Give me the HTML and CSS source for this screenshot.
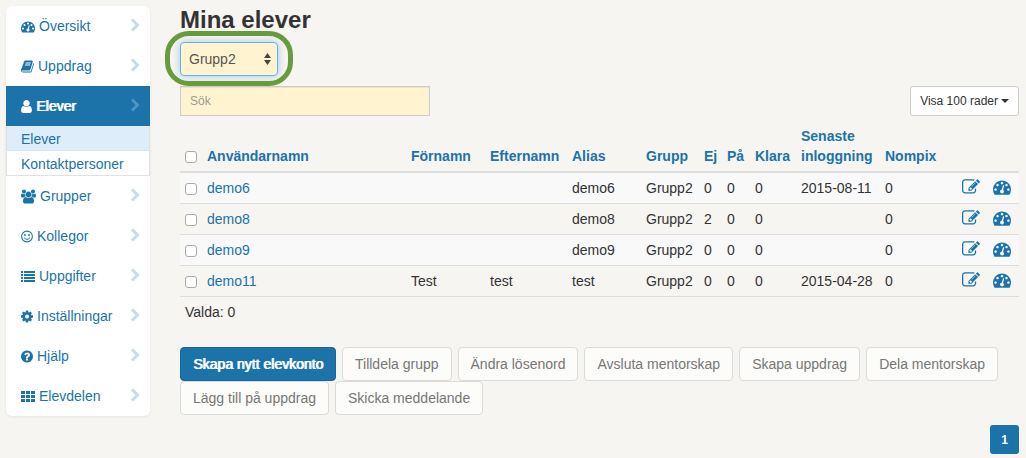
FILE: index.html
```html
<!DOCTYPE html>
<html lang="sv">
<head>
<meta charset="utf-8">
<meta name="viewport" content="width=device-width, initial-scale=1">
<title>Mina elever</title>
<link rel="stylesheet" href="styles.css">
</head>
<body>
<svg class="sprite" aria-hidden="true">
  <symbol id="i-dash" viewBox="0 0 1792 1792"><path d="M384 1152q0-53-37.5-90.5t-90.5-37.5-90.5 37.5-37.5 90.5 37.5 90.5 90.5 37.5 90.5-37.5 37.5-90.5zm192-448q0-53-37.5-90.5t-90.5-37.5-90.5 37.5-37.5 90.5 37.5 90.5 90.5 37.5 90.5-37.5 37.5-90.5zm428 481l101-382q6-26-7.5-48.5t-38.5-29.5-48 6.5-30 39.5l-101 382q-60 5-107 43.5t-63 98.5q-20 77 20 146t117 89 146-20 89-117q16-60-6-117t-72-91zm660-33q0-53-37.5-90.5t-90.5-37.5-90.5 37.5-37.5 90.5 37.5 90.5 90.5 37.5 90.5-37.5 37.5-90.5zm-640-640q0-53-37.5-90.5t-90.5-37.5-90.5 37.5-37.5 90.5 37.5 90.5 90.5 37.5 90.5-37.5 37.5-90.5zm448 192q0-53-37.5-90.5t-90.5-37.5-90.5 37.5-37.5 90.5 37.5 90.5 90.5 37.5 90.5-37.5 37.5-90.5zm320 448q0 261-141 483-19 29-54 29h-1402q-35 0-54-29-141-221-141-483 0-182 71-348t191-286 286-191 348-71 348 71 286 191 191 286 71 348z"/></symbol>
  <symbol id="i-book" viewBox="0 0 1664 1792"><path d="M1639 478q40 57 18 129l-275 906q-19 64-76.5 107.5t-122.5 43.5h-923q-77 0-148.5-53.5t-99.5-131.5q-24-67-2-127 0-4 3-27t4-37q1-8-3-21.5t-3-19.5q2-11 8-21t16.5-23.5 16.5-23.5q23-38 45-91.5t30-91.5q3-10 .5-30t-.5-28q3-11 17-28t17-23q21-36 42-92t25-90q1-9-2.5-32t.5-28q4-13 22-30.5t22-22.5q19-26 42.5-84.5t27.5-96.5q1-8-3-25.5t-2-26.5q2-8 9-18t18-23 17-21q8-12 16.5-30.5t15-35 16-36 19.5-32 26.5-23.5 36-11.5 47.5 5.5l-1 3q38-9 51-9h761q74 0 114 56t18 130l-274 906q-36 119-71.5 153.5t-128.5 34.5h-869q-27 0-38 15-11 16-1 43 24 70 144 70h923q29 0 56-15.5t35-41.5l300-987q7-22 5-57 38 15 59 43zm-1064 2q-4 13 2 22.5t20 9.5h608q13 0 25.5-9.5t16.5-22.5l21-64q4-13-2-22.5t-20-9.5h-608q-13 0-25.5 9.5t-16.5 22.5zm-83 256q-4 13 2 22.5t20 9.5h608q13 0 25.5-9.5t16.5-22.5l21-64q4-13-2-22.5t-20-9.5h-608q-13 0-25.5 9.5t-16.5 22.5z"/></symbol>
  <symbol id="i-user" viewBox="256 0 1280 1792"><path d="M1536 1399q0 109-62.5 187t-150.5 78h-854q-88 0-150.5-78t-62.5-187q0-85 8.5-160.5t31.5-152 58.5-131 94-89 134.5-34.5q131 128 313 128t313-128q76 0 134.5 34.5t94 89 58.5 131 31.5 152 8.5 160.5zm-256-887q0 159-112.5 271.5t-271.5 112.5-271.5-112.5-112.5-271.5 112.5-271.5 271.5-112.5 271.5 112.5 112.5 271.5z"/></symbol>
  <symbol id="i-users" viewBox="0 0 1920 1792"><path d="M593 896q-162 5-265 128h-134q-82 0-138-40.5t-56-118.5q0-353 124-353 6 0 43.5 21t97.5 42.5 119 21.5q67 0 133-23-5 37-5 66 0 139 81 256zm1071 637q0 120-73 189.5t-194 69.5h-874q-121 0-194-69.5t-73-189.5q0-53 3.5-103.5t14-109 26.5-108.5 43-97.5 62-81 85.5-53.5 111.5-20q10 0 43 21.5t73 48 107 48 135 21.5 135-21.5 107-48 73-48 43-21.5q61 0 111.5 20t85.5 53.5 62 81 43 97.5 26.5 108.5 14 109 3.5 103.5zm-1024-1277q0 106-75 181t-181 75-181-75-75-181 75-181 181-75 181 75 75 181zm704 384q0 159-112.5 271.5t-271.5 112.5-271.5-112.5-112.5-271.5 112.5-271.5 271.5-112.5 271.5 112.5 112.5 271.5zm576 225q0 78-56 118.5t-138 40.5h-134q-103-123-265-128 81-117 81-256 0-29-5-66 66 23 133 23 59 0 119-21.5t97.5-42.5 43.5-21q124 0 124 353zm-128-609q0 106-75 181t-181 75-181-75-75-181 75-181 181-75 181 75 75 181z"/></symbol>
  <symbol id="i-smile" viewBox="128 0 1536 1792"><circle cx="896" cy="896" r="690" fill="none" stroke="currentColor" stroke-width="135"/><circle cx="640" cy="704" r="120"/><circle cx="1152" cy="704" r="120"/><path d="M560 1060q90 215 336 215t336-215" fill="none" stroke="currentColor" stroke-width="128" stroke-linecap="round"/></symbol>
  <symbol id="i-list" viewBox="0 0 14 15"><path d="M0 2h2v2H0zM0 5h2v2H0zM0 8h2v2H0zM0 11h2v2H0zM3 2h11v2H3zM3 5h11v2H3zM3 8h11v2H3zM3 11h11v2H3z"/></symbol>
  <symbol id="i-cog" viewBox="128 0 1536 1792"><path d="M1152 896q0-106-75-181t-181-75-181 75-75 181 75 181 181 75 181-75 75-181zm512-109v222q0 12-8 23t-20 13l-185 28q-19 54-39 91 35 50 107 138 10 12 10 25t-9 23q-27 37-99 108t-94 71q-12 0-26-9l-138-108q-44 23-91 38-16 136-29 186-7 28-36 28h-222q-14 0-24.5-8.5t-11.5-21.5l-28-184q-49-16-90-37l-141 107q-10 9-25 9-14 0-25-11-126-114-165-168-7-10-7-23 0-12 8-23 15-21 51-66.5t54-70.5q-27-50-41-99l-183-27q-13-2-21-12.5t-8-23.5v-222q0-12 8-23t19-13l186-28q14-46 39-92-40-57-107-138-10-12-10-24 0-10 9-23 26-36 98.5-107.5t94.500-71.500q13 0 26 10l138 107q44-23 91-38 16-136 29-186 7-28 36-28h222q14 0 24.500 8.500t11.500 21.500l28 184q49 16 90 37l142-107q9-9 24-9 13 0 25 10 129 119 165 170 7 8 7 22 0 12-8 23-15 21-51 66.500t-54 70.500q26 50 41 98l183 28q13 2 21 12.500t8 23.500z"/></symbol>
  <symbol id="i-help" viewBox="128 0 1536 1792"><path d="M1024 1376v-192q0-14-9-23t-23-9h-192q-14 0-23 9t-9 23v192q0 14 9 23t23 9h192q14 0 23-9t9-23zm256-672q0-88-55.5-163t-138.5-116-170-41q-243 0-371 213-15 24 8 42l132 100q7 6 19 6 16 0 25-12 53-68 86-92 34-24 86-24 48 0 85.5 26t37.5 59q0 38-20 61t-68 45q-63 28-115.5 86.5t-52.5 125.5v36q0 14 9 23t23 9h192q14 0 23-9t9-23q0-19 21.5-49.5t54.5-49.5q32-18 49-28.5t46-35 44.5-48 28-60.5 12.5-81zm384 192q0 209-103 385.5t-279.5 279.5-385.5 103-385.5-103-279.5-279.5-103-385.5 103-385.5 279.5-279.5 385.5-103 385.5 103 279.5 279.5 103 385.5z"/></symbol>
  <symbol id="i-grid" viewBox="0 0 14 15"><path d="M0 2h4v3H0zM5 2h4v3H5zM10 2h4v3h-4zM0 6h4v3H0zM5 6h4v3H5zM10 6h4v3h-4zM0 10h4v3H0zM5 10h4v3H5zM10 10h4v3h-4z"/></symbol>
  <symbol id="i-chev" viewBox="0 0 10 14"><path d="M2 1.500L7.500 7L2 12.500" fill="none" stroke="currentColor" stroke-width="3"/></symbol>
  <symbol id="i-edit" viewBox="0 0 1792 1792"><path d="M888 1184l116-116-152-152-116 116v56h96v96h56zm440-720q-16-16-33 1l-350 350q-17 17-1 33t33-1l350-350q17-17 1-33zm80 594v190q0 119-84.500 203.500t-203.500 84.500h-832q-119 0-203.500-84.500t-84.500-203.500v-832q0-119 84.500-203.500t203.500-84.500h832q63 0 117 25 15 7 18 23 3 17-9 29l-49 49q-14 14-32 8-23-6-45-6h-832q-66 0-113 47t-47 113v832q0 66 47 113t113 47h832q66 0 113-47t47-113v-126q0-13 9-22l64-64q15-15 35-7t20 29zm-96-738l288 288-672 672h-288v-288zm444 132l-92 92-288-288 92-92q28-28 68-28t68 28l152 152q28 28 28 68t-28 68z"/></symbol>
</svg>
<div class="page">
  <nav class="sidebar" aria-label="Huvudmeny">
    <a class="nav-item" href="#"><svg class="icon w14"><use href="#i-dash"/></svg><span>Översikt</span><svg class="chevron"><use href="#i-chev"/></svg></a>
    <a class="nav-item" href="#"><svg class="icon w13"><use href="#i-book"/></svg><span>Uppdrag</span><svg class="chevron"><use href="#i-chev"/></svg></a>
    <a class="nav-item active" href="#"><svg class="icon w11"><use href="#i-user"/></svg><span>Elever</span><svg class="chevron"><use href="#i-chev"/></svg></a>
    <div class="submenu">
      <a class="sub-item current" href="#">Elever</a>
      <a class="sub-item" href="#">Kontaktpersoner</a>
    </div>
    <a class="nav-item" href="#"><svg class="icon w15"><use href="#i-users"/></svg><span>Grupper</span><svg class="chevron"><use href="#i-chev"/></svg></a>
    <a class="nav-item" href="#"><svg class="icon w12"><use href="#i-smile"/></svg><span>Kollegor</span><svg class="chevron"><use href="#i-chev"/></svg></a>
    <a class="nav-item" href="#"><svg class="icon w14"><use href="#i-list"/></svg><span>Uppgifter</span><svg class="chevron"><use href="#i-chev"/></svg></a>
    <a class="nav-item" href="#"><svg class="icon w12"><use href="#i-cog"/></svg><span>Inställningar</span><svg class="chevron"><use href="#i-chev"/></svg></a>
    <a class="nav-item" href="#"><svg class="icon w12"><use href="#i-help"/></svg><span>Hjälp</span><svg class="chevron"><use href="#i-chev"/></svg></a>
    <a class="nav-item" href="#"><svg class="icon w14"><use href="#i-grid"/></svg><span>Elevdelen</span><svg class="chevron"><use href="#i-chev"/></svg></a>
  </nav>
  <main class="main">
    <h1 class="title">Mina elever</h1>
    <div class="group-picker">
      <select class="group-select" aria-label="Grupp"><option>Grupp2</option></select>
      <svg class="select-arrows" viewBox="0 0 7 12" aria-hidden="true"><path d="M0 5l3.500-5L7 5zM0 7h7l-3.500 5z"/></svg>
    </div>
    <div class="toolbar">
      <input class="search" type="text" placeholder="Sök" aria-label="Sök">
      <button class="rows-button" type="button">Visa 100 rader<span class="caret"></span></button>
    </div>
    <table class="students">
      <colgroup><col class="c-check"><col><col class="c-first"><col class="c-last"><col class="c-alias"><col class="c-group"><col class="c-ej"><col class="c-pa"><col class="c-klara"><col class="c-login"><col class="c-nompix"><col class="c-icon"><col class="c-icon"></colgroup>
      <thead>
        <tr><th><input class="check" type="checkbox" aria-label="Välj alla"></th><th>Användarnamn</th><th>Förnamn</th><th>Efternamn</th><th>Alias</th><th>Grupp</th><th>Ej</th><th>På</th><th>Klara</th><th>Senaste inloggning</th><th>Nompix</th><th></th><th></th></tr>
      </thead>
      <tbody>
        <tr><td><input class="check" type="checkbox" aria-label="demo6"></td><td><a href="#">demo6</a></td><td></td><td></td><td>demo6</td><td>Grupp2</td><td>0</td><td>0</td><td>0</td><td>2015-08-11</td><td>0</td><td><a class="act edit" href="#" aria-label="Redigera"><svg><use href="#i-edit"/></svg></a></td><td><a class="act" href="#" aria-label="Översikt"><svg><use href="#i-dash"/></svg></a></td></tr>
        <tr><td><input class="check" type="checkbox" aria-label="demo8"></td><td><a href="#">demo8</a></td><td></td><td></td><td>demo8</td><td>Grupp2</td><td>2</td><td>0</td><td>0</td><td></td><td>0</td><td><a class="act edit" href="#" aria-label="Redigera"><svg><use href="#i-edit"/></svg></a></td><td><a class="act" href="#" aria-label="Översikt"><svg><use href="#i-dash"/></svg></a></td></tr>
        <tr><td><input class="check" type="checkbox" aria-label="demo9"></td><td><a href="#">demo9</a></td><td></td><td></td><td>demo9</td><td>Grupp2</td><td>0</td><td>0</td><td>0</td><td></td><td>0</td><td><a class="act edit" href="#" aria-label="Redigera"><svg><use href="#i-edit"/></svg></a></td><td><a class="act" href="#" aria-label="Översikt"><svg><use href="#i-dash"/></svg></a></td></tr>
        <tr><td><input class="check" type="checkbox" aria-label="demo11"></td><td><a href="#">demo11</a></td><td>Test</td><td>test</td><td>test</td><td>Grupp2</td><td>0</td><td>0</td><td>0</td><td>2015-04-28</td><td>0</td><td><a class="act edit" href="#" aria-label="Redigera"><svg><use href="#i-edit"/></svg></a></td><td><a class="act" href="#" aria-label="Översikt"><svg><use href="#i-dash"/></svg></a></td></tr>
      </tbody>
      <tfoot><tr><td colspan="13">Valda: 0</td></tr></tfoot>
    </table>
    <div class="actions">
      <button class="btn primary" type="button">Skapa nytt elevkonto</button>
      <button class="btn" type="button">Tilldela grupp</button>
      <button class="btn" type="button">Ändra lösenord</button>
      <button class="btn" type="button">Avsluta mentorskap</button>
      <button class="btn" type="button">Skapa uppdrag</button>
      <button class="btn" type="button">Dela mentorskap</button>
      <button class="btn" type="button">Lägg till på uppdrag</button>
      <button class="btn" type="button">Skicka meddelande</button>
    </div>
    <nav class="pager" aria-label="Sidor"><a class="page-link" href="#">1</a></nav>
  </main>
</div>
</body>
</html>
```
FILE: styles.css
```css
* { box-sizing: border-box; }

body {
  margin: 0;
  background: #f7f5f2;
  color: #333;
  font: 14px/20px "Liberation Sans", Arial, sans-serif;
}

a { color: #1b73aa; text-decoration: none; }
svg { fill: currentColor; }
button, input, select { font-family: inherit; margin: 0; }

.sprite { display: none; }

.page {
  display: flex;
  align-items: flex-start;
  gap: 30px;
  padding: 6px 7px 4px 6px;
}

/* Sidebar */
.sidebar {
  flex: none;
  width: 144px;
  background: #fff;
  border-radius: 6px;
  box-shadow: 0 1px 3px rgba(0, 0, 0, .08);
}

.nav-item {
  display: flex;
  align-items: center;
  gap: 4px;
  height: 40px;
  padding: 0 10px 0 15px;
}

.icon { flex: none; height: 15px; }
.w11 { width: 11px; }
.w12 { width: 12px; }
.w13 { width: 13px; }
.w14 { width: 14px; }
.w15 { width: 15px; }

.chevron {
  width: 10px;
  height: 14px;
  margin: 0 0 3px auto;
  color: #c5dcea;
}

.nav-item.active { background: #1b73aa; color: #fff; }
.nav-item.active span, .btn.primary { text-shadow: 1px 0 currentColor; }
.nav-item.active .chevron { color: #4f95c0; }

.submenu { border: 1px solid #e1e1e1; border-top: 0; }
.sub-item { display: block; padding: 3px 14px 1px; }
.sub-item.current {
  background: #ddeefa;
  border-bottom: 1px solid #dde3e8;
}

/* Main column */
.main { flex: 1; min-width: 0; }

.title {
  margin: 0 0 8px;
  font-size: 24px;
  line-height: 28px;
}

.group-picker { position: relative; width: 98px; }

.group-picker::after {
  content: "";
  position: absolute;
  inset: -11px -15px -10px;
  border: 5px solid #669c3a;
  border-radius: 24px;
  pointer-events: none;
}

.group-select {
  display: block;
  width: 100%;
  height: 34px;
  padding: 0 8px;
  appearance: none;
  background: #fff4cf;
  border: 1px solid #66afe9;
  border-radius: 4px;
  box-shadow: 0 0 8px rgba(102, 175, 233, .6);
  color: #555;
  font-size: 14px;
}

.select-arrows {
  position: absolute;
  top: 11px;
  right: 7px;
  width: 7px;
  height: 12px;
  color: #444;
  pointer-events: none;
}

.toolbar {
  display: flex;
  justify-content: space-between;
  margin: 10px 0 5px;
}

.search {
  width: 250px;
  height: 30px;
  padding: 0 9px;
  background: #fff4cf;
  border: 1px solid #ccc;
  border-radius: 0;
  box-shadow: inset 0 1px 1px rgba(0, 0, 0, .075);
  font-size: 12px;
}
.search::placeholder { color: #999; }

.rows-button {
  display: flex;
  align-items: center;
  gap: 3px;
  height: 30px;
  padding: 0 9px;
  background: #fff;
  border: 1px solid #ccc;
  border-radius: 3px;
  color: #333;
  font-size: 12px;
}

.caret {
  border: 4px solid transparent;
  border-top-color: currentColor;
  border-bottom: 0;
}

/* Table */
.students {
  width: 100%;
  table-layout: fixed;
  border-spacing: 0;
}

.c-check { width: 22px; }
.c-first { width: 79px; }
.c-last { width: 82px; }
.c-alias { width: 74px; }
.c-group { width: 58px; }
.c-ej { width: 23px; }
.c-pa { width: 28px; }
.c-klara { width: 46px; }
.c-login { width: 84px; }
.c-nompix { width: 77px; }
.c-icon { width: 31px; }

.students th, .students td {
  padding: 5px 0 5px 5px;
  text-align: left;
  white-space: nowrap;
}

.students th {
  vertical-align: bottom;
  white-space: normal;
  border-bottom: 2px solid #ddd;
  color: #1b73aa;
}

.students td { vertical-align: top; }
.students tbody td { border-bottom: 1px solid #ddd; }
.students tbody tr:nth-child(odd) { background: #f9f9f9; }

.check {
  display: block;
  width: 12px;
  height: 12px;
  margin: 5px 0 3px;
  appearance: none;
  background: #fff;
  border: 1px solid #aaa;
  border-radius: 3px;
}

.act { display: block; height: 20px; }
.act svg { display: block; width: 18px; height: 18px; }

/* Buttons below the table */
.actions {
  display: flex;
  flex-wrap: wrap;
  gap: 0 6px;
  margin-top: 20px;
}

.btn {
  height: 34px;
  padding: 0 12px;
  background: #fcfcfa;
  border: 1px solid #dbdad8;
  border-radius: 4px;
  color: #777;
  font-size: 14px;
}

.btn.primary { background: #1b73aa; border-color: #18669a; color: #fff; }

.pager {
  display: flex;
  justify-content: flex-end;
  margin-top: 10px;
}

.page-link {
  padding: 5px 11px 4px;
  background: #1b73aa;
  border-radius: 3px;
  color: #fff;
  font-size: 12px;
  font-weight: bold;
}
```
